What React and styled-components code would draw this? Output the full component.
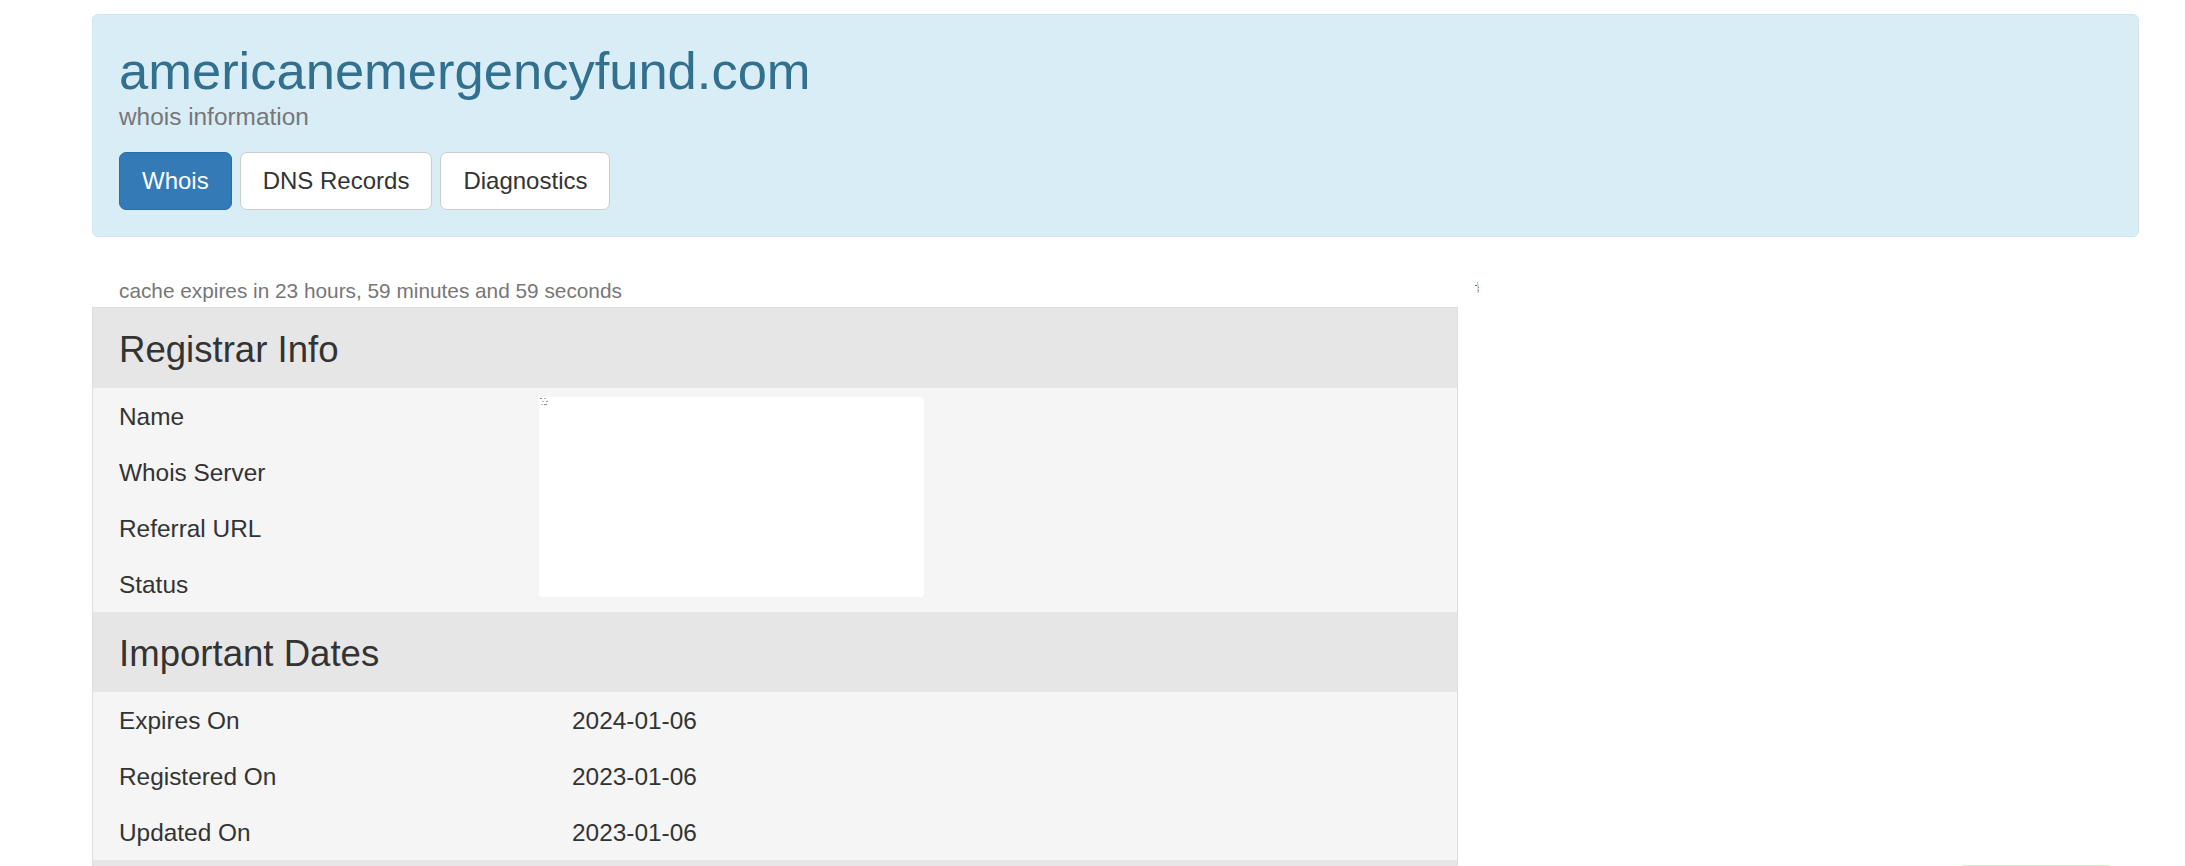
import React from "react";
import styled, { createGlobalStyle } from "styled-components";

const GlobalStyle = createGlobalStyle`
  body {
    margin: 0;
    background: #fff;
    color: #333;
    font-family: "Liberation Sans", Arial, sans-serif;
  }
`;

const Page = styled.div`
  padding: 14px 46px 0 92px;
`;

const Banner = styled.div`
  background: #d9edf7;
  border: 1px solid #cfe6f0;
  border-radius: 6px;
  padding: 27px 26px 26px;
`;

const Title = styled.h1`
  margin: 0;
  font-size: 52.5px;
  font-weight: 400;
  line-height: 58px;
  color: #31708f;
`;

const Subtitle = styled.p`
  margin: 3px 0 0;
  font-size: 24.4px;
  line-height: 28px;
  color: #777;
`;

const Tabs = styled.div`
  display: flex;
  gap: 8px;
  margin-top: 21px;
`;

const TabButton = styled.a`
  display: block;
  padding: 12px 22px;
  font-size: 24px;
  line-height: 32px;
  border-radius: 7px;
  border: 1px solid ${(props) => (props.$active ? "#2e6da4" : "#ccc")};
  background: ${(props) => (props.$active ? "#337ab7" : "#fff")};
  color: ${(props) => (props.$active ? "#fff" : "#333")};
  text-decoration: none;
  cursor: pointer;
`;

const Main = styled.div`
  display: grid;
  grid-template-columns: 1366px 1fr;
  margin-top: 42px;
`;

const CacheNote = styled.div`
  padding-left: 27px;
  margin-bottom: 4px;
  font-size: 20.8px;
  line-height: 24px;
  color: #777;
`;

const Sheet = styled.div`
  border: 1px solid #ddd;
  border-bottom: none;
`;

const SectionHead = styled.div`
  height: 80px;
  box-sizing: border-box;
  display: flex;
  align-items: center;
  padding: 3px 0 0 26px;
  background: #e6e6e6;
  font-size: 36.6px;
  color: #333;
`;

const SectionBody = styled.div`
  display: grid;
  grid-template-columns: 446px 1fr;
  grid-auto-rows: 56px;
  background: #f5f5f5;
`;

const Label = styled.div`
  display: flex;
  align-items: center;
  padding: 2px 0 0 26px;
  font-size: 24.4px;
  color: #333;
`;

const Value = styled.div`
  display: flex;
  align-items: center;
  padding: 2px 0 0 33px;
  font-size: 24.4px;
  color: #333;
`;

const InfoImage = styled.div`
  grid-column: 2;
  grid-row: 1 / span 4;
  align-self: start;
  margin-top: 9px;
  width: 385px;
  height: 200px;
  background: #fff;
  border-radius: 4px;
  line-height: 0;
`;

const Side = styled.div`
  display: flex;
  flex-direction: column;
  padding-left: 17px;
`;

const AdSlot = styled.div`
  height: 586px;
  padding-top: 3px;
  box-sizing: border-box;
  line-height: 0;
`;

const Notice = styled.div`
  align-self: flex-end;
  margin-right: 27px;
  width: 152px;
  height: 48px;
  box-sizing: border-box;
  background: #dff0d8;
  border: 1px solid #d6e9c6;
  border-radius: 4px;
`;

const BrokenIcon = ({ tint = "#555" }) => (
  <svg width="12" height="10" viewBox="0 0 12 10">
    <rect x="1" y="1" width="2" height="1" fill={tint} opacity="0.7" />
    <rect x="5" y="1" width="2" height="1" fill={tint} opacity="0.5" />
    <rect x="3" y="4" width="2" height="1" fill={tint} opacity="0.4" />
    <rect x="7" y="4" width="2" height="1" fill={tint} opacity="0.6" />
    <rect x="2" y="7" width="2" height="1" fill={tint} opacity="0.4" />
    <rect x="5" y="7" width="3" height="1" fill={tint} opacity="0.7" />
  </svg>
);

const SideIcon = () => (
  <svg width="6" height="12" viewBox="0 0 6 12">
    <rect x="2" y="0" width="1" height="2" fill="#7a9a7a" opacity="0.6" />
    <rect x="0" y="3" width="2" height="1" fill="#4f6f4f" />
    <rect x="2" y="2" width="2" height="9" fill="#cfe3cf" />
    <rect x="3" y="5" width="1" height="1" fill="#6f8f6f" />
    <rect x="3" y="8" width="1" height="1" fill="#6f8f6f" />
  </svg>
);

const registrarLabels = ["Name", "Whois Server", "Referral URL", "Status"];

const dates = [
  ["Expires On", "2024-01-06"],
  ["Registered On", "2023-01-06"],
  ["Updated On", "2023-01-06"],
];

export default function App() {
  return (
    <Page>
      <GlobalStyle />
      <Banner>
        <Title>americanemergencyfund.com</Title>
        <Subtitle>whois information</Subtitle>
        <Tabs>
          <TabButton $active>Whois</TabButton>
          <TabButton>DNS Records</TabButton>
          <TabButton>Diagnostics</TabButton>
        </Tabs>
      </Banner>
      <Main>
        <div>
          <CacheNote>cache expires in 23 hours, 59 minutes and 59 seconds</CacheNote>
          <Sheet>
            <SectionHead>Registrar Info</SectionHead>
            <SectionBody>
              {registrarLabels.map((label, i) => (
                <Label key={label} style={{ gridRow: i + 1 }}>
                  {label}
                </Label>
              ))}
              <InfoImage>
                <BrokenIcon />
              </InfoImage>
            </SectionBody>
            <SectionHead>Important Dates</SectionHead>
            <SectionBody>
              {dates.map(([label, value]) => (
                <React.Fragment key={label}>
                  <Label>{label}</Label>
                  <Value>{value}</Value>
                </React.Fragment>
              ))}
            </SectionBody>
            <SectionHead />
          </Sheet>
        </div>
        <Side>
          <AdSlot>
            <SideIcon />
          </AdSlot>
          <Notice />
        </Side>
      </Main>
    </Page>
  );
}
